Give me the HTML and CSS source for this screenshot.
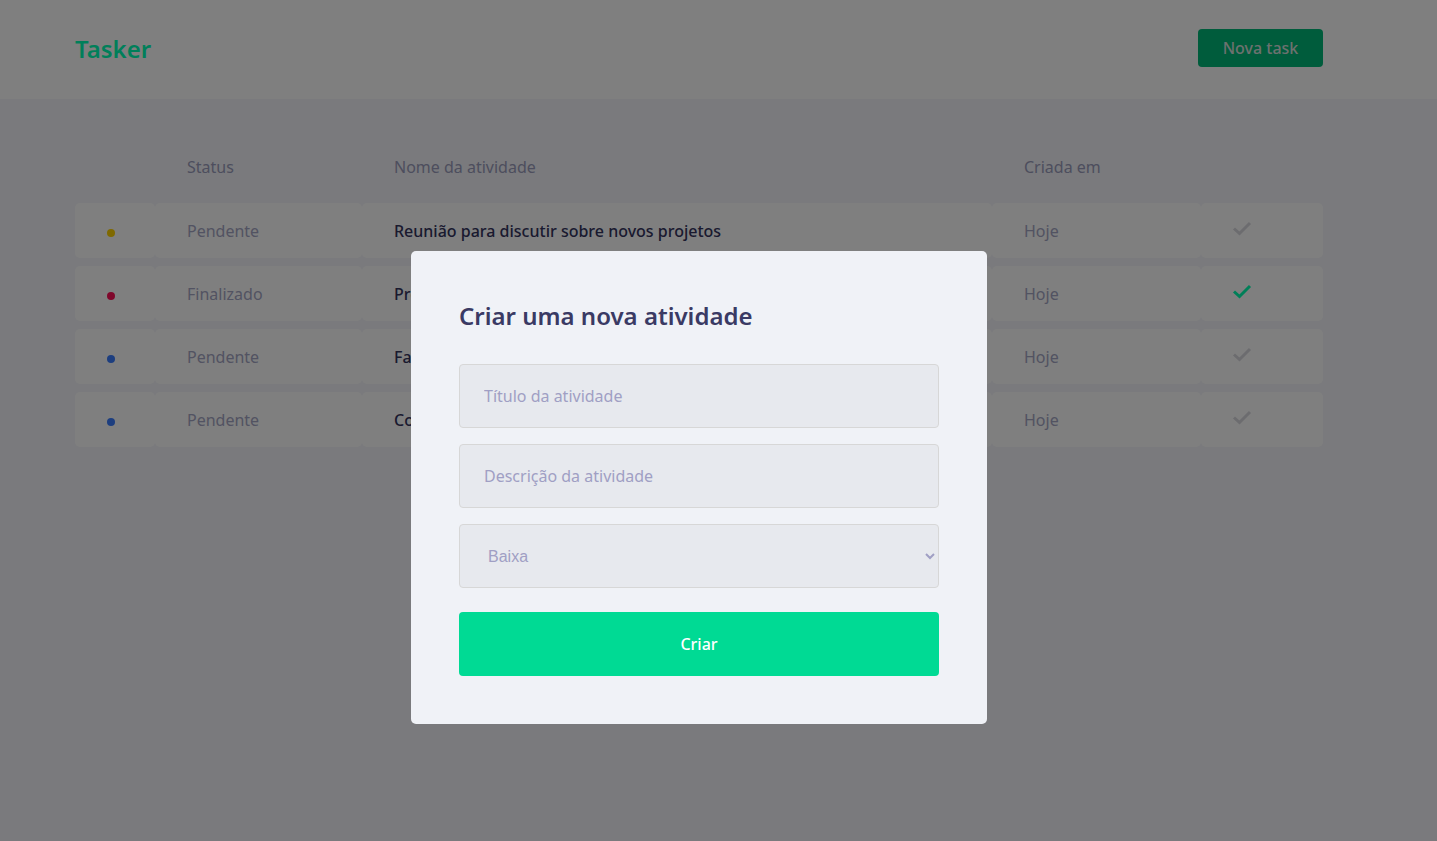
FILE: index.html
```html
<!DOCTYPE html>
<html lang="pt-BR">
<head>
<meta charset="utf-8">
<title>Tasker</title>
<link rel="stylesheet" href="styles.css">
</head>
<body>
<header class="topbar">
  <div class="container topbar-inner">
    <h1 class="logo">Tasker</h1>
    <button class="btn-new" type="button">Nova task</button>
  </div>
</header>
<main class="container main">
  <table class="tasks">
    <thead>
      <tr>
        <th class="c-dot"></th>
        <th class="c-status">Status</th>
        <th class="c-name">Nome da atividade</th>
        <th class="c-date">Criada em</th>
        <th class="c-check"></th>
      </tr>
    </thead>
    <tbody>
      <tr>
        <td><span class="dot dot-yellow"></span></td>
        <td class="muted">Pendente</td>
        <td class="name">Reunião para discutir sobre novos projetos</td>
        <td class="muted">Hoje</td>
        <td><svg class="check" width="20" height="16" viewBox="0 0 20 16"><polyline points="2,8.5 7.5,13.5 18,3" fill="none" stroke="currentColor" stroke-width="3"/></svg></td>
      </tr>
      <tr>
        <td><span class="dot dot-red"></span></td>
        <td class="muted">Finalizado</td>
        <td class="name">Preparar apresentação do projeto</td>
        <td class="muted">Hoje</td>
        <td><svg class="check done" width="20" height="16" viewBox="0 0 20 16"><polyline points="2,8.5 7.5,13.5 18,3" fill="none" stroke="currentColor" stroke-width="3"/></svg></td>
      </tr>
      <tr>
        <td><span class="dot dot-blue"></span></td>
        <td class="muted">Pendente</td>
        <td class="name">Fazer revisão do código</td>
        <td class="muted">Hoje</td>
        <td><svg class="check" width="20" height="16" viewBox="0 0 20 16"><polyline points="2,8.5 7.5,13.5 18,3" fill="none" stroke="currentColor" stroke-width="3"/></svg></td>
      </tr>
      <tr>
        <td><span class="dot dot-blue"></span></td>
        <td class="muted">Pendente</td>
        <td class="name">Comprar material de escritório</td>
        <td class="muted">Hoje</td>
        <td><svg class="check" width="20" height="16" viewBox="0 0 20 16"><polyline points="2,8.5 7.5,13.5 18,3" fill="none" stroke="currentColor" stroke-width="3"/></svg></td>
      </tr>
    </tbody>
  </table>
</main>
<div class="overlay">
  <form class="modal">
    <h2 class="modal-title">Criar uma nova atividade</h2>
    <input class="field" type="text" placeholder="Título da atividade">
    <input class="field" type="text" placeholder="Descrição da atividade">
    <select class="field select">
      <option>Baixa</option>
      <option>Média</option>
      <option>Alta</option>
    </select>
    <button class="btn-submit" type="button">Criar</button>
  </form>
</div>
</body>
</html>
```
FILE: styles.css
```css
* { box-sizing: border-box; }
html, body { margin: 0; padding: 0; }
body {
  background: #f4f5fa;
  font-family: "Noto Sans", "Open Sans", sans-serif;
  font-size: 16px;
  color: #363f5f;
  height: 841px;
  overflow: hidden;
}
.container {
  width: 1248px;
  margin: 0 auto;
  position: relative;
  left: -19.5px;
}
.topbar {
  background: #ffffff;
  height: 99px;
}
.topbar-inner {
  height: 99px;
  display: flex;
  align-items: center;
  justify-content: space-between;
}
.logo {
  margin: -2px 0 0 0;
  font-size: 24px;
  font-weight: 600;
  color: #00ffb4;
  line-height: 32px;
}
.btn-new {
  width: 125px;
  height: 38px;
  margin-top: -4px;
  border: 0;
  border-radius: 4px;
  background: #00b878;
  color: #d8e2de;
  font-family: inherit;
  font-size: 16px;
  font-weight: 500;
}
.main { padding-top: 32px; }
.tasks {
  width: 1248px;
  border-collapse: separate;
  border-spacing: 0 8px;
  table-layout: fixed;
}
.tasks th {
  height: 56px;
  padding: 0 32px;
  text-align: left;
  font-weight: 400;
  color: #9a9cbc;
  line-height: 24px;
}
.c-dot { width: 80px; }
.c-status { width: 207px; }
.c-name { width: 630px; }
.c-date { width: 209px; }
.c-check { width: 122px; }
.tasks td {
  height: 55px;
  padding: 0 32px;
  background: #ffffff;
  border-radius: 5px;
  line-height: 24px;
  white-space: nowrap;
  overflow: hidden;
}
.muted { color: #a4a6c4; }
.name { color: #34345e; font-weight: 500; }
.dot {
  display: block;
  width: 8px;
  height: 8px;
  border-radius: 50%;
  margin-top: 4px;
}
.dot-yellow { background: #ffd200; }
.dot-red { background: #ff0e57; }
.dot-blue { background: #3a7cff; }
.check {
  display: block;
  color: #d9d9de;
  margin-top: -6px;
  margin-left: -1px;
}
.check.done { color: #00ffb0; }
.overlay {
  position: fixed;
  inset: 0;
  background: rgba(0, 0, 0, 0.5);
}
.modal {
  position: absolute;
  top: 251px;
  left: 411px;
  width: 576px;
  padding: 48px;
  background: #f0f2f7;
  border-radius: 5px;
  display: flex;
  flex-direction: column;
}
.modal-title {
  margin: 0 0 31px 0;
  font-size: 24px;
  font-weight: 600;
  line-height: 34px;
  color: #3a3a64;
}
.field {
  width: 100%;
  height: 64px;
  padding: 0 24px;
  border: 1px solid #d7d7d7;
  border-radius: 4px;
  background: #e7e9ee;
  font-size: 16px;
  color: #a09fc4;
  margin-bottom: 16px;
}
input.field { font-family: inherit; }
.field::placeholder { color: #a09fc4; }
.select {
  font-family: "Liberation Sans", Arial, sans-serif;
  color: #a09fc4;
  margin-bottom: 24px;
}
.btn-submit {
  height: 64px;
  border: 0;
  border-radius: 4px;
  background: #00da94;
  color: #ffffff;
  font-family: inherit;
  font-size: 16px;
  font-weight: 500;
}
```
